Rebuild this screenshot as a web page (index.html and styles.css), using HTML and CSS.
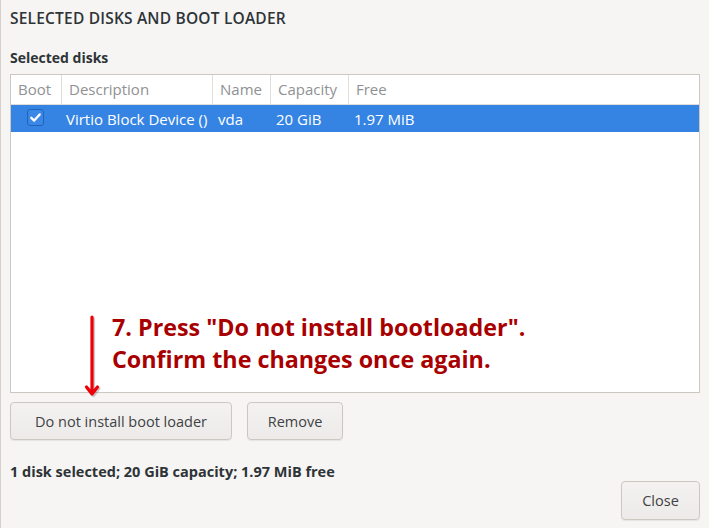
FILE: index.html
```html
<!DOCTYPE html>
<html>
<head>
<meta charset="utf-8">
<link rel="stylesheet" href="styles.css">
</head>
<body>
<div class="dialog">
  <h1 class="title">SELECTED DISKS AND BOOT LOADER</h1>
  <h2 class="subtitle">Selected disks</h2>
  <div class="table">
    <div class="row head">
      <div class="c c-boot">Boot</div>
      <div class="c c-desc">Description</div>
      <div class="c c-name">Name</div>
      <div class="c c-cap">Capacity</div>
      <div class="c c-free">Free</div>
    </div>
    <div class="row sel">
      <div class="c c-boot"><span class="check"><svg width="13" height="13" viewBox="0 0 13 13"><path d="M2.3 6.8 L5.2 9.6 L10.7 3.4" fill="none" stroke="#fff" stroke-width="2.3" stroke-linecap="round" stroke-linejoin="round"/></svg></span></div>
      <div class="c c-desc">Virtio Block Device ()</div>
      <div class="c c-name">vda</div>
      <div class="c c-cap">20 GiB</div>
      <div class="c c-free">1.97 MiB</div>
    </div>
    <div class="note">
      <svg class="arrow" width="20" height="86" viewBox="0 0 20 86">
        <g transform="translate(1.5,1.5)" opacity="0.3" fill="none" stroke="#555" stroke-width="3.2" stroke-linecap="round" stroke-linejoin="round"><path d="M8 2 V79 M2.5 72 L8 79 L13.5 72"/></g>
        <g fill="none" stroke="#ee0008" stroke-width="3.2" stroke-linecap="round" stroke-linejoin="round"><path d="M8 2 V79 M2.5 72 L8 79 L13.5 72"/></g>
      </svg>
      <p class="note-text">7. Press "Do not install bootloader".<br>Confirm the changes once again.</p>
    </div>
  </div>
  <div class="actions">
    <button class="btn btn-wide">Do not install boot loader</button>
    <button class="btn btn-remove">Remove</button>
  </div>
  <p class="summary">1 disk selected; 20 GiB capacity; 1.97 MiB free</p>
  <div class="footer"><button class="btn btn-close">Close</button></div>
</div>
</body>
</html>
```
FILE: styles.css
```css
html, body { margin: 0; padding: 0; }
body {
  width: 709px; height: 528px; overflow: hidden;
  background: #f6f5f4;
  font-family: "Open Sans", "Noto Sans", sans-serif;
  color: #2e3436;
}
.dialog {
  box-sizing: border-box;
  height: 528px;
  border-left: 1px solid #d5d0cc;
  padding: 0 9px 0 9px;
  display: flex; flex-direction: column;
}
.title {
  margin: 7px 0 0 0;
  font-size: 15.5px; font-weight: 600; letter-spacing: 0.2px;
  line-height: 22px; color: #2e3436;
}
.subtitle {
  margin: 19px 0 0 0;
  font-size: 14px; font-weight: 700; line-height: 20px;
  color: #2e3436;
}
.table {
  margin-top: 6px;
  height: 319px; box-sizing: border-box;
  background: #fff; border: 1px solid #cdc7c2;
  display: flex; flex-direction: column;
}
.row { display: flex; }
.head { height: 29px; border-bottom: 1px solid #e1ded9; }
.head .c { color: #8f9193; border-right: 1px solid #e1ded9; }
.head .c-free { border-right: 0; }
.sel { height: 27px; background: #3584e4; color: #fff; }
.c {
  box-sizing: border-box; padding-left: 7px;
  font-size: 15px; line-height: 29px; white-space: nowrap;
}
.sel .c { line-height: 28px; }
.c-boot { width: 51px; }
.c-desc { width: 151px; }
.c-name { width: 58px; }
.c-cap { width: 78px; }
.c-free { flex: 1; }
.sel .c-desc { padding-left: 4px; }
.sel .c-name, .sel .c-cap, .sel .c-free { padding-left: 5px; }
.check {
  display: inline-flex; align-items: center; justify-content: center;
  width: 17px; height: 17px; margin: 4px 0 0 9px; vertical-align: top;
  box-sizing: border-box;
  border: 1px solid #1f64bb; border-radius: 3px;
  background: #3a87e6;
}
.note {
  display: flex; align-items: flex-start;
  margin: 179px 0 0 73px;
}
.arrow { margin-top: 4px; flex: none; }
.note-text {
  margin: 0 0 0 8px;
  font-weight: 700; font-size: 23.3px; line-height: 32px;
  color: #a80000;
}
.actions { display: flex; gap: 15px; margin-top: 9px; }
.btn {
  font-family: inherit; font-size: 14.5px; color: #3d4244;
  height: 38px; box-sizing: border-box;
  border: 1px solid #cdc7c2; border-radius: 4px;
  background: linear-gradient(#f4f2f1, #edebe9);
  box-shadow: 0 1px 1px rgba(0,0,0,0.07);
  padding: 0;
}
.btn-wide { width: 222px; }
.btn-remove { width: 96px; }
.summary {
  margin: 22px 0 0 0;
  font-size: 14.5px; font-weight: 700; line-height: 20px;
}
.footer { display: flex; justify-content: flex-end; margin-top: -1px; }
.btn-close { width: 79px; height: 39px; }
```
